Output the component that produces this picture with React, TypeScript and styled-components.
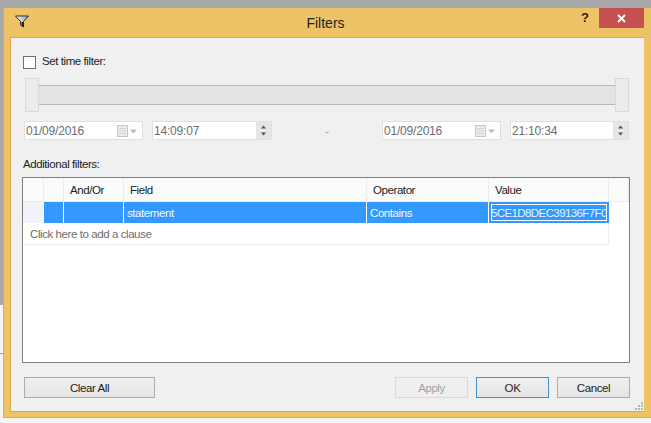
import styled, { createGlobalStyle } from 'styled-components';

const GlobalStyle = createGlobalStyle`
  html, body {
    margin: 0;
    padding: 0;
    width: 651px;
    height: 423px;
    overflow: hidden;
    background: #f7f5f1;
  }
  * {
    box-sizing: border-box;
  }
`;

const Screen = styled.div`
  width: 651px;
  height: 423px;
  padding-top: 8px;
  background:
    linear-gradient(#a9a9a9 0, #a9a9a9 8px, transparent 8px),
    linear-gradient(#a9a9a9 0, #a9a9a9 305px, transparent 305px, transparent 353px, #9a9a9a 353px, #9a9a9a 354px, transparent 354px) left top / 3px 100% no-repeat,
    #f7f5f1;
  font-family: 'Liberation Sans', Arial, sans-serif;
  font-size: 11.5px;
  letter-spacing: -0.42px;
  color: #1c1c1c;
`;

const Frame = styled.div`
  width: 648px;
  height: 410px;
  margin-left: 3px;
  padding: 0 7px 6px 7px;
  background: #eec365;
  box-shadow: inset 1px -1px 0 #dcae55;
  display: flex;
  flex-direction: column;
`;

const TitleBar = styled.div`
  height: 29px;
  display: flex;
  align-items: center;
  justify-content: space-between;
  position: relative;
`;

const TitleText = styled.div`
  position: absolute;
  left: 0;
  right: 3px;
  top: 7px;
  text-align: center;
  font-size: 14px;
  letter-spacing: 0;
  color: #222;
`;

const Funnel = styled.svg`
  margin-left: 5px;
  margin-top: -2px;
`;

const Controls = styled.div`
  display: flex;
  align-items: flex-start;
  align-self: flex-start;
  margin-left: auto;
`;

const Help = styled.span`
  width: 20px;
  margin-top: 2px;
  margin-right: 4px;
  font-weight: bold;
  font-size: 13px;
  letter-spacing: 0;
  text-align: center;
  color: #2b2207;
`;

const Close = styled.div`
  width: 45px;
  height: 20px;
  background: #c75050;
  display: flex;
  align-items: center;
  justify-content: center;
`;

const Client = styled.div`
  flex: 1;
  background: #f0f0f0;
  border: 1px solid #d9a950;
  border-width: 1px 0 1px 1px;
  padding: 17px 14px 0 12px;
  display: flex;
  flex-direction: column;
  position: relative;
`;

const CheckRow = styled.label`
  display: flex;
  align-items: center;
  gap: 6px;
  height: 14px;
`;

const Check = styled.span`
  width: 13px;
  height: 13px;
  background: #fff;
  border: 1px solid #707070;
`;

const CheckText = styled.span`
  margin-bottom: 2px;
`;

const SliderRow = styled.div`
  display: flex;
  align-items: center;
  margin: 9px 1px 0 2px;
  height: 34px;
`;

const Thumb = styled.div`
  width: 14px;
  height: 34px;
  background: #ececec;
  border: 1px solid #dadada;
`;

const Track = styled.div`
  flex: 1;
  height: 20px;
  background: #e4e4e4;
  border-top: 1px solid #b9b9b9;
  border-bottom: 1px solid #b9b9b9;
`;

const DateRow = styled.div`
  display: flex;
  align-items: center;
  margin-top: 9px;
  margin-left: 1px;
  color: #6d6d6d;
`;

const Input = styled.div<{ $w: number; $ml?: number }>`
  width: ${(p) => p.$w}px;
  margin-left: ${(p) => p.$ml ?? 0}px;
  height: 19px;
  background: #fff;
  border: 1px solid #e0e0e0;
  display: flex;
  align-items: center;
  padding-left: 1px;
  justify-content: space-between;
  font-size: 12px;
  letter-spacing: -0.2px;
`;

const Dash = styled.span`
  width: 110px;
  text-align: center;
  color: #9a9a9a;
`;

const CalendarBox = styled.span`
  display: flex;
  align-items: center;
  margin-right: 4px;
`;

const Spinner = styled.span`
  width: 15px;
  height: 17px;
  background: #e6e6e6;
  display: flex;
  align-items: center;
  justify-content: center;
`;

const SectionLabel = styled.div`
  margin-top: 18px;
  height: 14px;
`;

const Grid = styled.div`
  margin-top: 5px;
  margin-left: -1px;
  height: 186px;
  width: 608px;
  background: #fff;
  border: 1px solid #808080;
`;

const HeaderRow = styled.div`
  display: grid;
  grid-template-columns: 21px 20px 60px 243px 122px 120px 1fr;
  height: 24px;
`;

const DataRow = styled(HeaderRow)`
  height: 21px;
`;

const HeadCell = styled.div`
  background: #fbfbfb;
  border-right: 1px solid #ececec;
  border-bottom: 1px solid #ececec;
  padding: 6px 0 0 6px;
  color: #222;
`;

const BodyCell = styled.div`
  background: #3399ff;
  border-right: 1px solid #fff;
  color: #f2f8ff;
  padding: 5px 0 0 3px;
`;

const RowMarker = styled.div`
  background: #f0f4f8;
  border-right: 1px solid #fff;
`;

const EditCell = styled.div`
  background: #3399ff;
  border: 2px solid #3399ff;
  box-shadow: inset 0 0 0 1px #fff;
  color: #e8f2ff;
  overflow: hidden;
  white-space: nowrap;
  padding: 3px 0 0 0;
  letter-spacing: -0.6px;
`;

const EditText = styled.span`
  border-right: 1px solid #27405f;
`;

const AddRow = styled.div`
  width: 586px;
  height: 22px;
  border-right: 1px solid #ececec;
  border-bottom: 1px solid #ececec;
  padding: 5px 0 0 7px;
  color: #6d6d6d;
`;

const Footer = styled.div`
  margin-top: 14px;
  display: flex;
  align-items: center;
  width: 606px;
  margin-left: 1px;
`;

const Button = styled.div<{ $w: number; $disabled?: boolean; $primary?: boolean; $ml?: number }>`
  width: ${(p) => p.$w}px;
  height: 21px;
  margin-left: ${(p) => p.$ml ?? 0}px;
  display: flex;
  align-items: center;
  justify-content: center;
  background: ${(p) => (p.$disabled ? '#efefef' : 'linear-gradient(#f0f0f0, #e5e5e5)')};
  border: 1px solid ${(p) => (p.$disabled ? '#d9d9d9' : p.$primary ? '#3c94d0' : '#acacac')};
  color: ${(p) => (p.$disabled ? '#a0a0a0' : '#1c1c1c')};
`;

const Grip = styled.svg`
  position: absolute;
  right: 0;
  bottom: 0;
`;

function CalendarIcon() {
  return (
    <svg width="21" height="12" viewBox="0 0 21 12">
      <rect x="0.5" y="0.5" width="10" height="11" fill="#ececec" stroke="#c6c6c6" />
      <path d="M2 3.5h7M2 6h7M2 8.5h7" stroke="#d4d4d4" />
      <path d="M13 4.5h7l-3.5 4z" fill="#bdbdbd" />
    </svg>
  );
}

function SpinIcon() {
  return (
    <svg width="9" height="13" viewBox="0 0 9 13">
      <path d="M4.5 1.5l2.5 3h-5z" fill="#555" />
      <path d="M1 6.5h7" stroke="#f4f4f4" />
      <path d="M2 8.5h5l-2.5 3z" fill="#555" />
    </svg>
  );
}

export default function App() {
  return (
    <Screen>
      <GlobalStyle />
      <Frame>
        <TitleBar>
          <Funnel width="14" height="13" viewBox="0 0 14 13">
            <defs>
              <linearGradient id="funnelFill" x1="0" x2="1" y1="0" y2="0">
                <stop offset="0" stopColor="#ffffff" />
                <stop offset="1" stopColor="#9a9a9a" />
              </linearGradient>
            </defs>
            <path d="M0.5 1h13L8.5 6.5V12L5.5 10V6.5z" fill="url(#funnelFill)" stroke="#2a2a2a" strokeWidth="1" />
            <path d="M6.5 7h2v5L6.5 10.5z" fill="#222" />
          </Funnel>
          <TitleText>Filters</TitleText>
          <Controls>
            <Help>?</Help>
            <Close>
              <svg width="9" height="9" viewBox="0 0 9 9">
                <path d="M1 1l7 7M8 1l-7 7" stroke="#fff" strokeWidth="2" />
              </svg>
            </Close>
          </Controls>
        </TitleBar>
        <Client>
          <CheckRow>
            <Check />
            <CheckText>Set time filter:</CheckText>
          </CheckRow>
          <SliderRow>
            <Thumb />
            <Track />
            <Thumb />
          </SliderRow>
          <DateRow>
            <Input $w={119}>
              01/09/2016
              <CalendarBox>
                <CalendarIcon />
              </CalendarBox>
            </Input>
            <Input $w={120} $ml={9}>
              14:09:07
              <Spinner>
                <SpinIcon />
              </Spinner>
            </Input>
            <Dash>-</Dash>
            <Input $w={119}>
              01/09/2016
              <CalendarBox>
                <CalendarIcon />
              </CalendarBox>
            </Input>
            <Input $w={119} $ml={9}>
              21:10:34
              <Spinner>
                <SpinIcon />
              </Spinner>
            </Input>
          </DateRow>
          <SectionLabel>Additional filters:</SectionLabel>
          <Grid>
            <HeaderRow>
              <HeadCell />
              <HeadCell />
              <HeadCell>And/Or</HeadCell>
              <HeadCell>Field</HeadCell>
              <HeadCell>Operator</HeadCell>
              <HeadCell>Value</HeadCell>
              <HeadCell />
            </HeaderRow>
            <DataRow>
              <RowMarker />
              <BodyCell />
              <BodyCell />
              <BodyCell>statement</BodyCell>
              <BodyCell>Contains</BodyCell>
              <EditCell>
                <EditText>5CE1D8DEC39136F7F0</EditText>
              </EditCell>
            </DataRow>
            <AddRow>Click here to add a clause</AddRow>
          </Grid>
          <Footer>
            <Button $w={131}>Clear All</Button>
            <Button $w={73} $ml={240} $disabled>
              Apply
            </Button>
            <Button $w={73} $ml={8} $primary>
              OK
            </Button>
            <Button $w={73} $ml={8}>
              Cancel
            </Button>
          </Footer>
          <Grip width="11" height="11" viewBox="0 0 11 11">
            <path d="M8 2h2v2H8zM5 5h2v2H5zM8 5h2v2H8zM2 8h2v2H2zM5 8h2v2H5zM8 8h2v2H8z" fill="#b8b8b8" />
          </Grip>
        </Client>
      </Frame>
    </Screen>
  );
}
